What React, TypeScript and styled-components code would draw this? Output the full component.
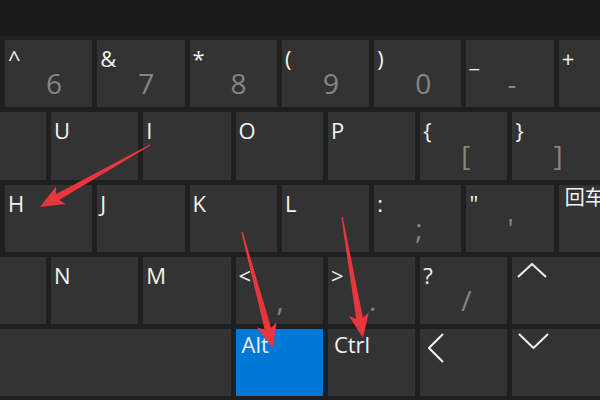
import styled, { createGlobalStyle } from "styled-components";

const KEY_W = 87.3;
const KEY_H = 67.3;
const GAP = 5;

const GlobalStyle = createGlobalStyle`
  html, body {
    margin: 0;
    padding: 0;
    background: #1a1a1a;
    overflow: hidden;
  }
`;

const Screen = styled.div`
  position: relative;
  width: 600px;
  height: 400px;
  overflow: hidden;
  font-family: "Open Sans", "Noto Sans", "Noto Sans CJK SC", sans-serif;
`;

const TitleBar = styled.div`
  height: 36px;
  background: #1a1a1a;
`;

const Board = styled.div`
  height: 364px;
  background: #1f1f1f;
  padding-top: 4px;
  box-sizing: border-box;
  display: flex;
  flex-direction: column;
  gap: ${GAP}px;
`;

const Row = styled.div<{ $shift: number }>`
  display: flex;
  gap: ${GAP}px;
  margin-left: ${(p) => p.$shift}px;
`;

const Key = styled.div<{ $span?: number; $active?: boolean }>`
  flex-shrink: 0;
  width: ${(p) => (p.$span ?? 1) * KEY_W + ((p.$span ?? 1) - 1) * GAP}px;
  height: ${KEY_H}px;
  background: ${(p) => (p.$active ? "#0078d7" : "#333333")};
  box-sizing: border-box;
  padding: 7px 0 0 3px;
  display: flex;
  flex-direction: column;
  color: ${(p) => (p.$active ? "#e8f1fb" : "#f2f2f2")};
`;

const Primary = styled.span<{ $fn?: boolean }>`
  font-size: 22px;
  line-height: 1;
  margin-top: ${(p) => (p.$fn ? "-3px" : "0")};
  margin-left: ${(p) => (p.$fn ? "3px" : "0")};
  white-space: nowrap;
`;

const CjkLabel = styled.span`
  font-family: "Noto Sans CJK SC", sans-serif;
  font-size: 20px;
  line-height: 1;
  margin-top: -5px;
  margin-left: 3px;
  white-space: nowrap;
`;

const Secondary = styled.span`
  font-size: 28px;
  line-height: 1;
  color: #858585;
  padding-left: 38px;
  margin-top: 0;
`;

const Chevron = styled.svg<{ $x: number; $y: number }>`
  display: block;
  margin: ${(p) => `${p.$y - 7}px 0 0 ${p.$x - 3}px`};
  stroke: #f0f0f0;
  stroke-width: 2;
  fill: none;
`;

const Overlay = styled.svg`
  position: absolute;
  left: 0;
  top: 0;
  pointer-events: none;
`;

type Pt = [number, number];

// tapered shaft ending in a filled triangular head
const arrowPoints = (tail: Pt, tip: Pt, headLen: number, headHalf: number, neck: number) => {
  const dx = tip[0] - tail[0];
  const dy = tip[1] - tail[1];
  const len = Math.hypot(dx, dy);
  const ux = dx / len;
  const uy = dy / len;
  const nx = -uy;
  const ny = ux;
  const bx = tip[0] - ux * headLen;
  const by = tip[1] - uy * headLen;
  const nbx = tip[0] - ux * (headLen - 4);
  const nby = tip[1] - uy * (headLen - 4);
  const pts: Pt[] = [
    [tail[0] + nx * 0.7, tail[1] + ny * 0.7],
    [nbx + nx * neck, nby + ny * neck],
    [bx + nx * headHalf, by + ny * headHalf],
    tip,
    [bx - nx * headHalf, by - ny * headHalf],
    [nbx - nx * neck, nby - ny * neck],
    [tail[0] - nx * 0.7, tail[1] - ny * 0.7],
  ];
  return pts.map((p) => `${p[0].toFixed(1)},${p[1].toFixed(1)}`).join(" ");
};

const arrows: { tail: Pt; tip: Pt }[] = [
  { tail: [150, 145], tip: [40, 207] },
  { tail: [242, 232], tip: [273, 348] },
  { tail: [342, 217], tip: [363, 338] },
];

type KeyDef = { p?: string; s?: string };

const row1: KeyDef[] = [
  { p: "^", s: "6" },
  { p: "&", s: "7" },
  { p: "*", s: "8" },
  { p: "(", s: "9" },
  { p: ")", s: "0" },
  { p: "_", s: "-" },
  { p: "+" },
];
const row2: KeyDef[] = [
  {},
  { p: "U" },
  { p: "I" },
  { p: "O" },
  { p: "P" },
  { p: "{", s: "[" },
  { p: "}", s: "]" },
];
const row3: KeyDef[] = [
  { p: "H" },
  { p: "J" },
  { p: "K" },
  { p: "L" },
  { p: ":", s: ";" },
  { p: "\"", s: "'" },
];
const row4: KeyDef[] = [
  {},
  { p: "N" },
  { p: "M" },
  { p: "<", s: "," },
  { p: ">", s: "." },
  { p: "?", s: "/" },
];

const renderKeys = (keys: KeyDef[]) =>
  keys.map((k, i) => (
    <Key key={i}>
      {k.p && <Primary>{k.p}</Primary>}
      {k.s && <Secondary>{k.s}</Secondary>}
    </Key>
  ));

export default function App() {
  return (
    <Screen>
      <GlobalStyle />
      <TitleBar />
      <Board>
        <Row $shift={5}>{renderKeys(row1)}</Row>
        <Row $shift={-41.3}>{renderKeys(row2)}</Row>
        <Row $shift={5}>
          {renderKeys(row3)}
          <Key>
            <CjkLabel>回车</CjkLabel>
          </Key>
        </Row>
        <Row $shift={-41.3}>
          {renderKeys(row4)}
          <Key>
            <Chevron $x={5} $y={6} width="30" height="15" viewBox="0 0 30 15">
              <polyline points="1,14 15,1 29,14" />
            </Chevron>
          </Key>
        </Row>
        <Row $shift={-41.3}>
          <Key $span={3} />
          <Key $active>
            <Primary $fn>Alt</Primary>
          </Key>
          <Key>
            <Primary $fn>Ctrl</Primary>
          </Key>
          <Key>
            <Chevron $x={8} $y={4} width="16" height="30" viewBox="0 0 16 30">
              <polyline points="15,1 1,15 15,29" />
            </Chevron>
          </Key>
          <Key>
            <Chevron $x={6} $y={4} width="31" height="16" viewBox="0 0 31 16">
              <polyline points="1,1 15.5,15 30,1" />
            </Chevron>
          </Key>
        </Row>
      </Board>
      <Overlay width="600" height="400" viewBox="0 0 600 400">
        {arrows.map((a, i) => (
          <polygon key={i} points={arrowPoints(a.tail, a.tip, 24, 10, 3.4)} fill="#e8363c" />
        ))}
      </Overlay>
    </Screen>
  );
}
